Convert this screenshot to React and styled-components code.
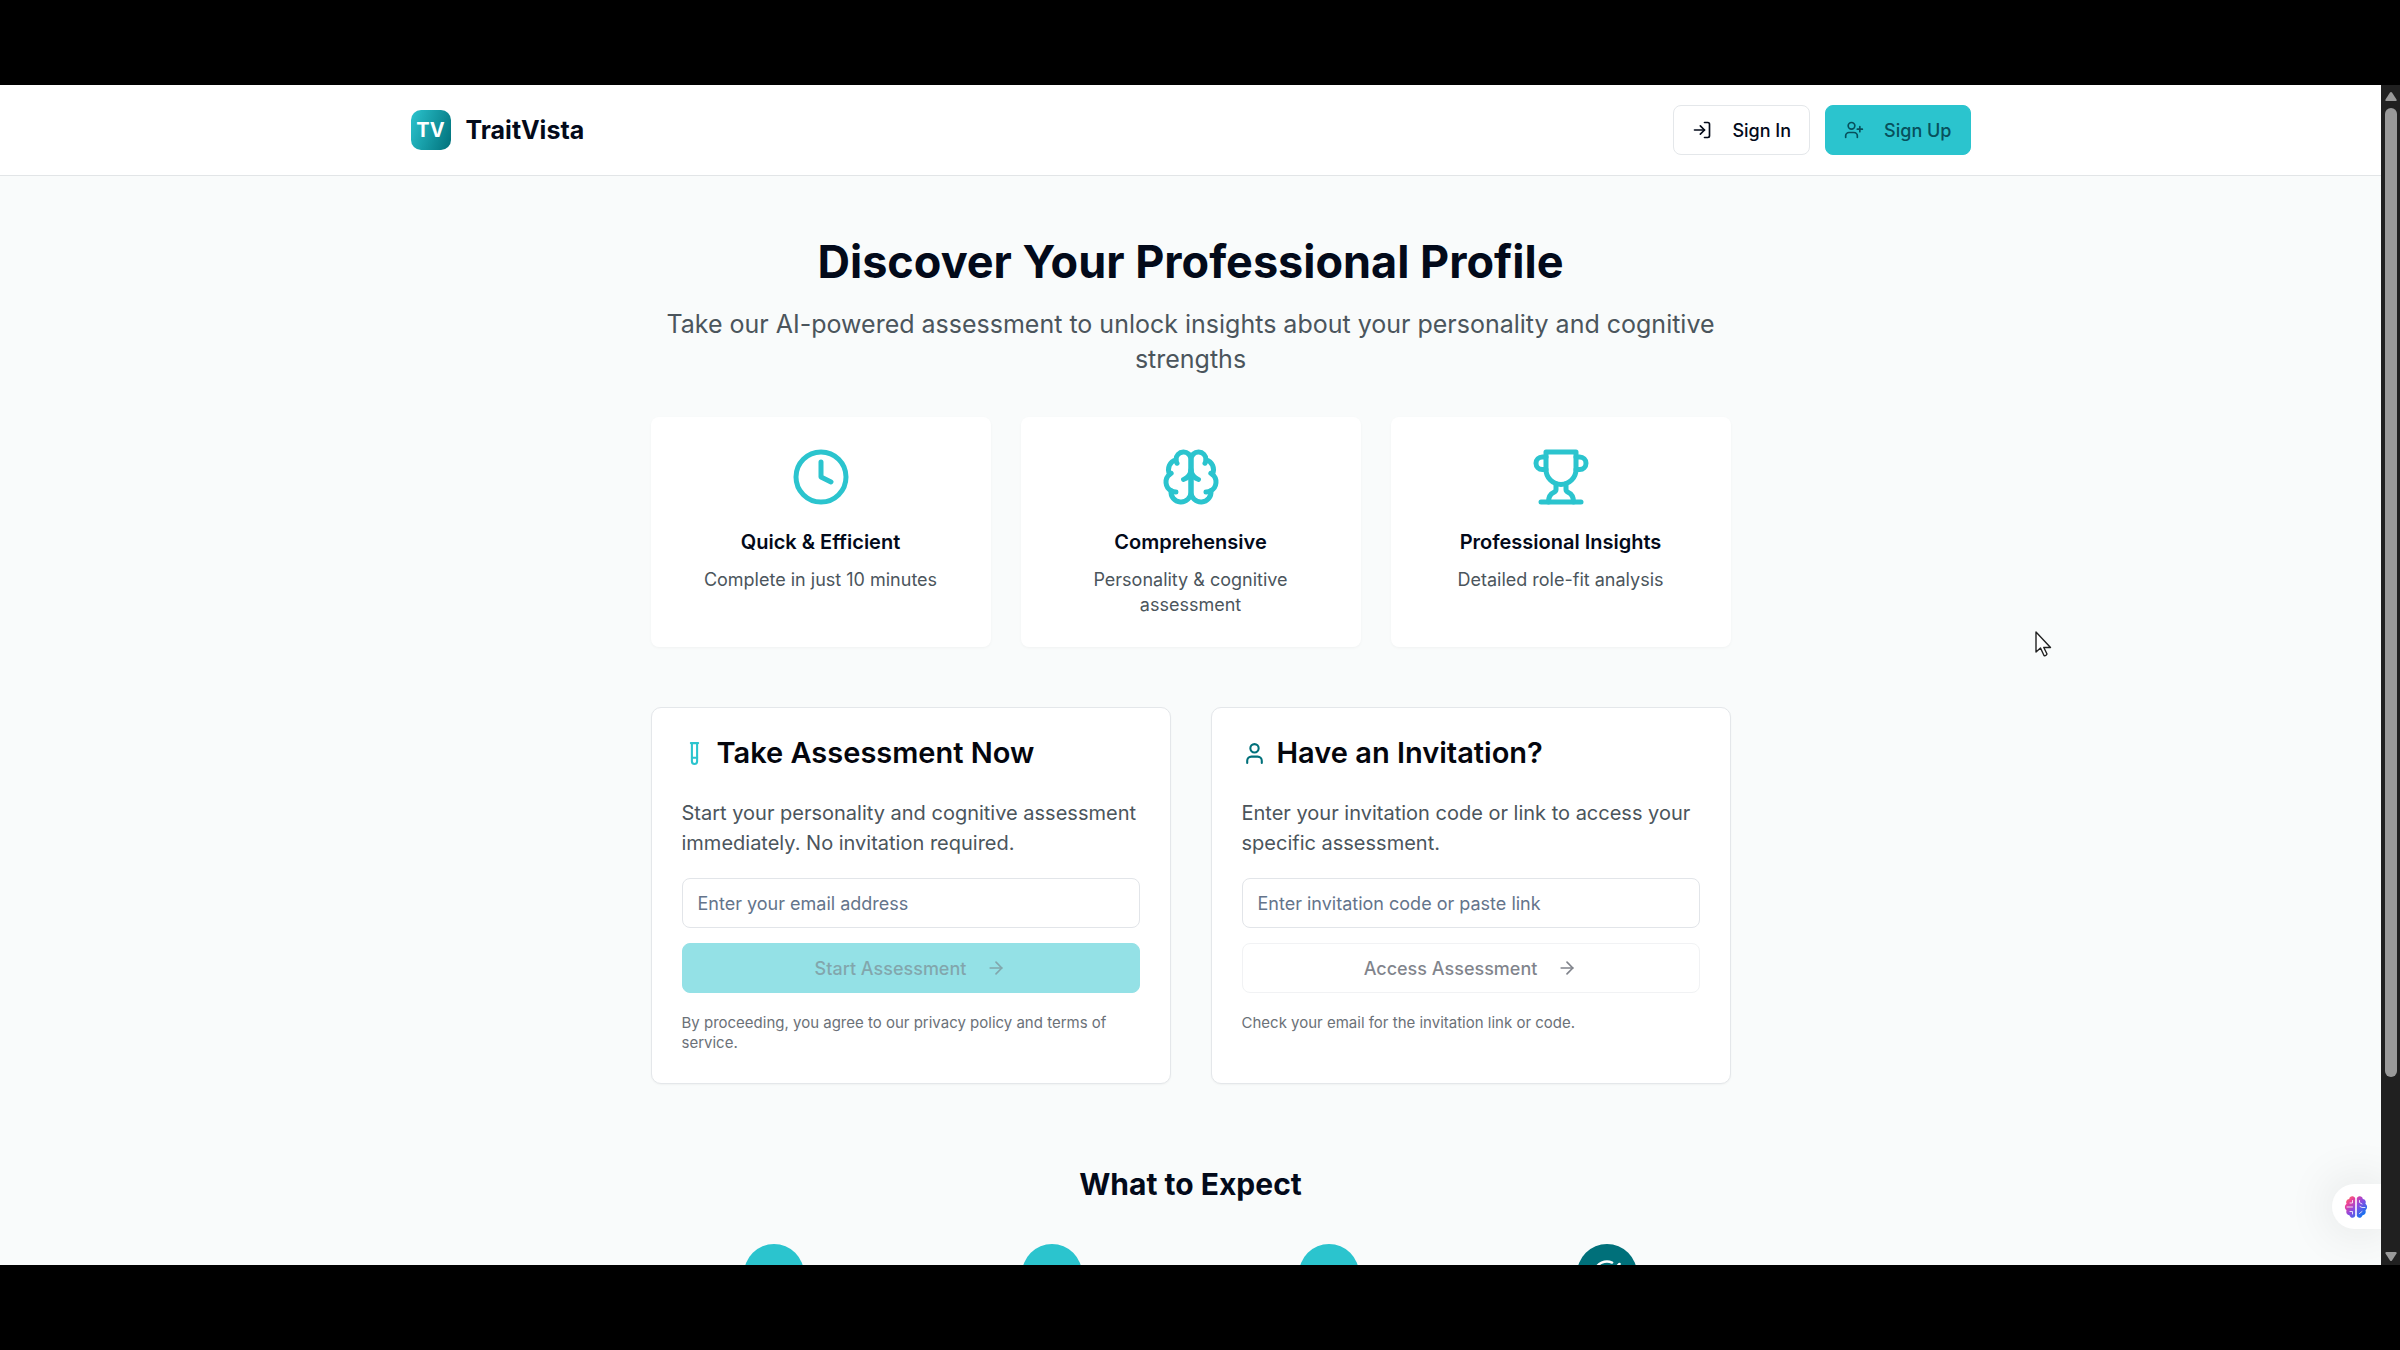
import React from 'react';
import styled, { createGlobalStyle } from 'styled-components';
import {
  ArrowRight,
  Clock,
  LogIn,
  TestTube,
  User,
  UserPlus
} from 'lucide-react';

const teal = '#2bc4ce';
const darkTeal = '#00707a';
const ink = '#030a1a';
const gray = '#4b555c';

const GlobalStyle = createGlobalStyle`
  * {
    box-sizing: border-box;
  }
  body {
    margin: 0;
    background: #000;
    color: ${ink};
    font-family: Inter, 'Liberation Sans', sans-serif;
  }
  h1, h2, h3, p {
    margin: 0;
  }
  button, input {
    font-family: inherit;
  }
`;
const Screen = styled.div`
  height: 100vh;
  padding: 85px 0;
  display: flex;
  background: #000;
`;
const Page = styled.div`
  position: relative;
  flex: 1;
  min-width: 0;
  overflow: hidden;
  background: #f9fbfb;
`;
const Header = styled.header`
  background: #fff;
  border-bottom: 1px solid #e2e5e7;
`;
const HeaderInner = styled.div`
  max-width: 1600px;
  height: 90px;
  margin: 0 auto;
  padding: 0 20px;
  display: flex;
  align-items: center;
  justify-content: space-between;
`;
const Brand = styled.a`
  display: flex;
  align-items: center;
  gap: 15px;
  color: ${ink};
  font-size: 25px;
  font-weight: 700;
  text-decoration: none;
`;
const Logo = styled.span`
  width: 40px;
  height: 40px;
  display: flex;
  align-items: center;
  justify-content: center;
  border-radius: 10px;
  background: linear-gradient(110deg, ${teal}, ${darkTeal});
  color: #fff;
  font-size: 20px;
  font-weight: 700;
`;
const Nav = styled.nav`
  display: flex;
  gap: 15px;
`;
const Button = styled.button`
  height: 50px;
  padding: 0 18px;
  display: flex;
  align-items: center;
  justify-content: center;
  gap: 20px;
  border: 1px solid ${props => (props.$primary ? teal : '#e4e7ea')};
  border-radius: 8px;
  background: ${props => (props.$primary ? teal : '#fff')};
  color: ${props => (props.$primary ? '#07505c' : ink)};
  font-size: 18px;
  font-weight: 500;
  &:disabled {
    opacity: 0.5;
  }
`;
const Main = styled.main`
  max-width: 1120px;
  margin: 0 auto;
  padding: 61px 20px;
`;
const Title = styled.h1`
  font-size: 45px;
  line-height: 50px;
  font-weight: 700;
  text-align: center;
`;
const Subtitle = styled.p`
  margin-top: 20px;
  color: ${gray};
  font-size: 25px;
  line-height: 35px;
  text-align: center;
`;
const Features = styled.section`
  margin-top: 40px;
  display: grid;
  grid-template-columns: repeat(3, 1fr);
  gap: 30px;
`;
const Feature = styled.article`
  padding: 30px;
  display: flex;
  flex-direction: column;
  align-items: center;
  border-radius: 8px;
  background: #fff;
  box-shadow: 0 1px 3px rgba(0, 0, 0, 0.04);
  text-align: center;
`;
const FeatureTitle = styled.h3`
  margin-top: 20px;
  font-size: 20px;
  line-height: 30px;
  font-weight: 600;
`;
const FeatureText = styled.p`
  margin-top: 10px;
  color: ${gray};
  font-size: 18px;
  line-height: 25px;
`;
const Forms = styled.section`
  margin-top: 60px;
  display: grid;
  grid-template-columns: repeat(2, 1fr);
  gap: 40px;
`;
const FormCard = styled.form`
  padding: 30px;
  display: flex;
  flex-direction: column;
  border: 1px solid #e4e7ea;
  border-radius: 10px;
  background: #fff;
  box-shadow: 0 1px 2px rgba(0, 0, 0, 0.04);
`;
const FormTitle = styled.h2`
  display: flex;
  align-items: center;
  gap: 10px;
  color: #04060d;
  font-size: 29px;
  line-height: 30px;
  font-weight: 600;
`;
const FormText = styled.label`
  margin: 30px 0 20px;
  color: ${gray};
  font-size: 20px;
  line-height: 30px;
`;
const Input = styled.input`
  height: 50px;
  margin-bottom: 15px;
  padding: 0 15px;
  border: 1px solid #e2e5e9;
  border-radius: 8px;
  background: #fff;
  color: ${ink};
  font-size: 18px;
  &::placeholder {
    color: #64748b;
    opacity: 1;
  }
`;
const Note = styled.p`
  margin-top: 20px;
  color: #6b7178;
  font-size: 15px;
  line-height: 20px;
`;
const StepsTitle = styled.h2`
  margin-top: 80px;
  font-size: 30px;
  line-height: 40px;
  font-weight: 700;
  text-align: center;
`;
const Steps = styled.div`
  margin-top: 40px;
  display: grid;
  grid-template-columns: repeat(4, 1fr);
  gap: 30px;
  justify-items: center;
`;
const Step = styled.span`
  width: 60px;
  height: 60px;
  display: flex;
  align-items: center;
  justify-content: center;
  border-radius: 100%;
  background: ${props => (props.$done ? darkTeal : teal)};
  color: #fff;
  font-size: 22px;
  font-weight: 700;
`;
const Assistant = styled.button`
  position: absolute;
  right: 0;
  bottom: 36px;
  width: 49px;
  height: 45px;
  padding: 0 0 0 12px;
  display: flex;
  align-items: center;
  border: 0;
  border-radius: 23px 0 0 23px;
  background: #fff;
  box-shadow: 0 0 50px rgba(0, 0, 0, 0.12);
`;
const Cursor = styled.svg`
  position: absolute;
  top: 546px;
  right: 329px;
`;
const Scrollbar = styled.div`
  width: 19px;
  padding: 7px 4px 4px;
  display: flex;
  flex-direction: column;
  align-items: center;
  gap: 7px;
  background: #202020;
`;
const Track = styled.div`
  flex: 1;
  width: 12px;
`;
const Thumb = styled.div`
  height: calc(100% - 168px);
  border-radius: 6px;
  background: #999;
`;
const Outline = styled.svg`
  fill: none;
  stroke: currentColor;
  stroke-width: 2;
  stroke-linecap: round;
  stroke-linejoin: round;
`;

const Brain = ({ size, color }) => (
  <Outline width={size} height={size} color={color} viewBox="0 0 24 24">
    <path d="M12 5a3 3 0 1 0-5.997.125 4 4 0 0 0-2.526 5.77 4 4 0 0 0 .556 6.588A4 4 0 1 0 12 18Z" />
    <path d="M12 5a3 3 0 1 1 5.997.125 4 4 0 0 1 2.526 5.77 4 4 0 0 1-.556 6.588A4 4 0 1 1 12 18Z" />
    <path d="M15 13a4.500 4.500 0 0 1-3-4 4.500 4.500 0 0 1-3 4" />
    <path d="M17.599 6.500a3 3 0 0 0 .399-1.375" />
    <path d="M6.003 5.125A3 3 0 0 0 6.401 6.500" />
    <path d="M3.477 10.896a4 4 0 0 1 .585-.396" />
    <path d="M19.938 10.500a4 4 0 0 1 .585.396" />
    <path d="M6 18a4 4 0 0 1-1.967-.516" />
    <path d="M19.967 17.484A4 4 0 0 1 18 18" />
  </Outline>
);

const Trophy = ({ size, color }) => (
  <Outline width={size} height={size} color={color} viewBox="0 0 24 24">
    <path d="M6 9H4.500a2.500 2.500 0 0 1 0-5H6" />
    <path d="M18 9h1.500a2.500 2.500 0 0 0 0-5H18" />
    <path d="M4 22h16" />
    <path d="M10 14.660V17c0 .55-.47.98-.97 1.210C7.850 18.750 7 20.240 7 22" />
    <path d="M14 14.660V17c0 .55.47.98.97 1.210C16.150 18.750 17 20.240 17 22" />
    <path d="M18 2H6v7a6 6 0 0 0 12 0V2Z" />
  </Outline>
);

const CheckCircle = ({ size }) => (
  <Outline width={size} height={size} viewBox="0 0 24 24">
    <path d="M22 11.080V12a10 10 0 1 1-5.930-9.140" />
    <path d="m9 11 3 3L22 4" />
  </Outline>
);

const AssistantIcon = () => (
  <svg width="24" height="24" viewBox="0 0 24 24">
    <defs>
      <linearGradient id="assistant" x1="0" y1="0" x2="1" y2="1">
        <stop offset="0.05" stopColor="#ff7a59" />
        <stop offset="0.25" stopColor="#e83e9c" />
        <stop offset="0.5" stopColor="#8a4be0" />
        <stop offset="0.85" stopColor="#1673f0" />
      </linearGradient>
    </defs>
    <path
      fill="url(#assistant)"
      d="M11.200 3.200C9.600.3 5.500.9 5.200 4 2.500 4.300 1.600 7 2.600 8.800.4 10.300.3 13.700 2.500 15.200 1.700 18 3.200 20 5.400 20.200 6.500 23.400 10.400 23.600 11.200 20.800ZM12.800 3.200C14.400.3 18.500.9 18.800 4 21.500 4.300 22.400 7 21.400 8.800 23.600 10.300 23.700 13.700 21.500 15.200 22.300 18 20.800 20 18.600 20.200 17.500 23.400 13.600 23.600 12.800 20.800Z"
    />
    <path
      fill="none"
      stroke="#fff"
      strokeOpacity="0.8"
      strokeLinecap="round"
      d="M8.500 5.500v2.500H6M3 12h5.500M6 16.500h2.500v2.500M15.500 5.500v2l2.500 1.500M21 12.500h-3l-2-1M15.500 18.500l2.500-2"
    />
  </svg>
);

const Arrow = ({ down }) => (
  <svg width="12" height="9" viewBox="0 0 12 9" fill="#999">
    <path
      d={
        down
          ? 'M1.500 0h9q1.500 0 1 1.500L7 8.500q-1 1-2 0L.5 1.500Q0 0 1.500 0Z'
          : 'M1.500 9h9q1.500 0 1-1.500L7 .5q-1-1-2 0L.5 7.500Q0 9 1.500 9Z'
      }
    />
  </svg>
);

const features = [
  { icon: Clock, title: 'Quick & Efficient', text: 'Complete in just 10 minutes' },
  { icon: Brain, title: 'Comprehensive', text: 'Personality & cognitive assessment' },
  { icon: Trophy, title: 'Professional Insights', text: 'Detailed role-fit analysis' }
];

const App = () => (
  <>
    <GlobalStyle />
    <Screen>
      <Page>
        <Header>
          <HeaderInner>
            <Brand href="#">
              <Logo>TV</Logo>
              TraitVista
            </Brand>
            <Nav>
              <Button type="button">
                <LogIn size={20} />
                Sign In
              </Button>
              <Button type="button" $primary>
                <UserPlus size={20} />
                Sign Up
              </Button>
            </Nav>
          </HeaderInner>
        </Header>
        <Main>
          <Title>Discover Your Professional Profile</Title>
          <Subtitle>
            Take our AI-powered assessment to unlock insights about your
            personality and cognitive strengths
          </Subtitle>
          <Features>
            {features.map(({ icon: Icon, title, text }) => (
              <Feature key={title}>
                <Icon size={60} color={teal} />
                <FeatureTitle>{title}</FeatureTitle>
                <FeatureText>{text}</FeatureText>
              </Feature>
            ))}
          </Features>
          <Forms>
            <FormCard>
              <FormTitle>
                <TestTube size={25} color={teal} />
                Take Assessment Now
              </FormTitle>
              <FormText htmlFor="email">
                Start your personality and cognitive assessment immediately. No
                invitation required.
              </FormText>
              <Input id="email" type="email" placeholder="Enter your email address" />
              <Button type="submit" $primary disabled>
                Start Assessment
                <ArrowRight size={20} />
              </Button>
              <Note>
                By proceeding, you agree to our privacy policy and terms of
                service.
              </Note>
            </FormCard>
            <FormCard>
              <FormTitle>
                <User size={25} color={darkTeal} />
                Have an Invitation?
              </FormTitle>
              <FormText htmlFor="invite">
                Enter your invitation code or link to access your specific
                assessment.
              </FormText>
              <Input
                id="invite"
                type="text"
                placeholder="Enter invitation code or paste link"
              />
              <Button type="submit" disabled>
                Access Assessment
                <ArrowRight size={20} />
              </Button>
              <Note>Check your email for the invitation link or code.</Note>
            </FormCard>
          </Forms>
          <StepsTitle>What to Expect</StepsTitle>
          <Steps>
            <Step>1</Step>
            <Step>2</Step>
            <Step>3</Step>
            <Step $done>
              <CheckCircle size={30} />
            </Step>
          </Steps>
        </Main>
        <Assistant type="button" aria-label="Open assistant">
          <AssistantIcon />
        </Assistant>
        <Cursor width="17" height="26" viewBox="0 0 17 26">
          <path
            d="M1 1v20l4.500-4 3.500 7.500q2 .8 3-1.500l-3.200-6.500H15.500Z"
            fill="#fff"
            stroke="#222"
            strokeWidth="1.400"
            strokeLinejoin="round"
          />
        </Cursor>
      </Page>
      <Scrollbar>
        <Arrow />
        <Track>
          <Thumb />
        </Track>
        <Arrow down />
      </Scrollbar>
    </Screen>
  </>
);

export default App;
